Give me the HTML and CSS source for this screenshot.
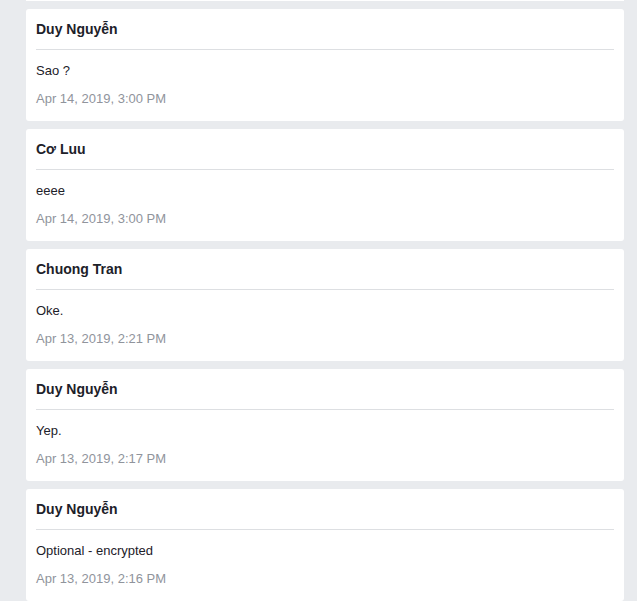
FILE: index.html
```html
<!DOCTYPE html>
<html lang="vi">
<head>
<meta charset="utf-8">
<title>Messages</title>
<link rel="stylesheet" href="styles.css">
</head>
<body>
<div class="feed">
  <div class="card">
    <div class="card-head">Duy Nguyễn</div>
    <div class="card-body">Sao ?</div>
    <div class="card-date">Apr 14, 2019, 3:00 PM</div>
  </div>
  <div class="card">
    <div class="card-head">Cơ Luu</div>
    <div class="card-body">eeee</div>
    <div class="card-date">Apr 14, 2019, 3:00 PM</div>
  </div>
  <div class="card">
    <div class="card-head">Chuong Tran</div>
    <div class="card-body">Oke.</div>
    <div class="card-date">Apr 13, 2019, 2:21 PM</div>
  </div>
  <div class="card">
    <div class="card-head">Duy Nguyễn</div>
    <div class="card-body">Yep.</div>
    <div class="card-date">Apr 13, 2019, 2:17 PM</div>
  </div>
  <div class="card">
    <div class="card-head">Duy Nguyễn</div>
    <div class="card-body">Optional - encrypted</div>
    <div class="card-date">Apr 13, 2019, 2:16 PM</div>
  </div>
</div>
</body>
</html>
```
FILE: styles.css
```css
html, body {
  margin: 0;
  padding: 0;
  background: #e9ebee;
  font-family: "Liberation Sans", Arial, sans-serif;
  color: #1d2129;
  overflow: hidden;
}
.feed {
  display: flex;
  flex-direction: column;
  gap: 8px;
  padding: 0 13px 0 26px;
}
.feed::before {
  content: "";
  display: block;
  height: 1px;
  background: #fff;
}
.card {
  background: #fff;
  border-radius: 3px;
  padding: 0 10px 14px;
}
.card-head {
  font-size: 14px;
  font-weight: bold;
  line-height: 16px;
  padding: 12px 0 12px;
  border-bottom: 1px solid #dddfe2;
}
.card-body {
  font-size: 13px;
  line-height: 16px;
  margin-top: 13px;
}
.card-date {
  font-size: 13px;
  line-height: 16px;
  margin-top: 12px;
  color: #90949c;
}
```
